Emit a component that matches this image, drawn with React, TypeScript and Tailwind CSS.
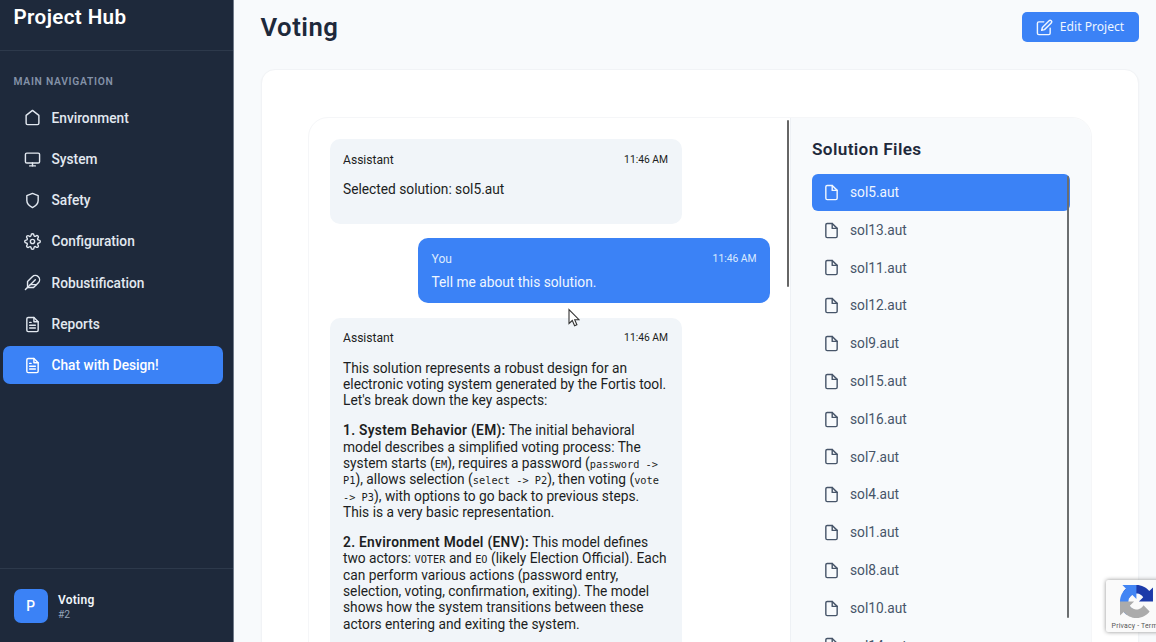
import React from "react";
import { FiFeather, FiSettings, FiShield, FiMonitor, FiFileText, FiFile, FiEdit } from "react-icons/fi";

function HomeIcon({ className }: { className?: string }) {
  return (
    <svg viewBox="0 0 24 24" fill="none" stroke="currentColor" strokeWidth="2" strokeLinecap="round" strokeLinejoin="round" className={className}>
      <path d="M3 9l9-7 9 7v11a2 2 0 0 1-2 2H5a2 2 0 0 1-2-2z" />
    </svg>
  );
}

const nav = [
  { label: "Environment", Icon: HomeIcon },
  { label: "System", Icon: FiMonitor },
  { label: "Safety", Icon: FiShield },
  { label: "Configuration", Icon: FiSettings },
  { label: "Robustification", Icon: FiFeather },
  { label: "Reports", Icon: FiFileText },
  { label: "Chat with Design!", Icon: FiFileText, active: true },
];

const files = ["sol5", "sol13", "sol11", "sol12", "sol9", "sol15", "sol16", "sol7", "sol4", "sol1", "sol8", "sol10", "sol14"];

function Code({ children }: { children: React.ReactNode }) {
  return <code className="font-['DejaVu_Sans_Mono',monospace] text-[10.3px] leading-none">{children}</code>;
}

function Lines({ lines }: { lines: React.ReactNode[] }) {
  return (
    <p className="mb-[13.6px] text-[13.76px] leading-[16.33px]">
      {lines.map((l, i) => (
        <span key={i} className="block whitespace-nowrap">{l}</span>
      ))}
    </p>
  );
}

function Sidebar() {
  return (
    <aside className="flex w-[234px] shrink-0 flex-col border-r border-[#717b8a] bg-[#1e293b]">
      <div className="h-[51px] border-b border-[#2d394b] pl-[13.5px] pt-[3px] text-[20.6px] font-semibold leading-[28px] tracking-[0.38px] text-white">
        Project Hub
      </div>
      <div className="pl-[13.5px] pt-[23.5px] text-[10.3px] font-semibold leading-[14px] tracking-[0.72px] text-[#8492a8]">MAIN NAVIGATION</div>
      <nav className="mt-[10.3px] flex flex-col gap-[3.25px] pl-[3px] pr-[10px]">
        {nav.map(({ label, Icon, active }) => (
          <a key={label} className={`flex h-[38px] items-center gap-[10.5px] rounded-[7px] pl-[21px] text-[13.73px] font-medium ${active ? "bg-[#3b82f6] text-white" : "text-[#e2e8f0]"}`}>
            <Icon className="h-[17px] w-[17px]" />
            {label}
          </a>
        ))}
      </nav>
      <div className="mt-auto flex h-[74px] items-center gap-[10px] border-t border-[#2d394b] pl-[13.5px] pt-[1px]">
        <div className="flex h-[34.5px] w-[34.5px] items-center justify-center rounded-[7px] bg-[#3b82f6] text-[13.73px] font-medium text-white">P</div>
        <div>
          <div className="text-[12px] font-semibold leading-[16px] tracking-[0.25px] text-[#f1f5f9]">Voting</div>
          <div className="text-[10.3px] leading-[13px] text-[#94a3b8]">#2</div>
        </div>
      </div>
    </aside>
  );
}

function MessageHead({ who }: { who: string }) {
  return (
    <div className="flex items-center justify-between leading-[14px]">
      <span className="text-[12.1px]">{who}</span>
      <span className="text-[10.3px]">11:46 AM</span>
    </div>
  );
}

function Recaptcha() {
  return (
    <div className="absolute left-[1106px] top-[580px] flex h-[52px] w-[60px] flex-col items-center rounded-[2px] bg-[#fafafa] pt-[5px] shadow-[0_0_4px_#909090]">
      <svg viewBox="0 0 64 64" className="h-[33px] w-[33px]">
        <path fill="#1c3aa9" d="M64 31.955l-.033-1.37V4.687l-7.16 7.16C50.948 4.674 42.033.093 32.05.093c-10.4 0-19.622 4.96-25.458 12.64l11.736 11.86a15.55 15.55 0 0 1 4.754-5.334c2.05-1.6 4.952-2.906 8.968-2.906.485 0 .86.057 1.135.163 4.976.393 9.288 3.14 11.828 7.124l-8.307 8.307 27.295-.002" />
        <path fill="#4285f4" d="M31.862.094l-1.37.033H4.594l7.16 7.16C4.58 13.147 0 22.06 0 32.046c0 10.4 4.96 19.622 12.64 25.458L24.5 45.768a15.55 15.55 0 0 1-5.334-4.754c-1.6-2.05-2.906-4.952-2.906-8.968 0-.485.057-.86.163-1.135.393-4.976 3.14-9.288 7.124-11.828l8.307 8.307L31.862.094" />
        <path fill="#ababab" d="M.001 32.045l.033 1.37v25.898l7.16-7.16c5.86 7.173 14.774 11.754 24.76 11.754 10.4 0 19.622-4.96 25.458-12.64L45.676 39.408a15.55 15.55 0 0 1-4.754 5.334c-2.05 1.6-4.952 2.906-8.968 2.906-.485 0-.86-.057-1.135-.163-4.976-.393-9.288-3.14-11.828-7.124l8.307-8.307-27.297-.01" />
      </svg>
      <div className="whitespace-nowrap pl-[1px] pt-[2.5px] text-[6.9px] leading-[10px] tracking-[0.2px] text-[#555]">Privacy - Terms</div>
    </div>
  );
}

export default function App() {
  return (
    <div className="relative flex h-[642px] w-[1156px] overflow-hidden bg-[#f8fafc] font-[Roboto,sans-serif]">
      <Sidebar />
      <main className="flex min-w-0 flex-1 flex-col pl-[26.5px] pr-[17.5px]">
        <header className="flex h-[69px] shrink-0 items-start justify-between">
          <h1 className="pt-[9.5px] text-[25.7px] font-semibold leading-[34px] tracking-[0.5px] text-[#1e293b]">Voting</h1>
          <button className="mt-[12px] flex h-[30px] w-[117px] items-center justify-center gap-[7px] rounded-[5px] bg-[#3b82f6] font-['Noto_Sans',sans-serif] text-[12.1px] text-[#eff6ff]">
            <FiEdit className="h-[17px] w-[17px]" />
            Edit Project
          </button>
        </header>
        <section className="h-[640px] shrink-0 rounded-[14px] border border-[#f1f3f6] bg-white px-[46px] pt-[47px] shadow-[0_1px_2px_rgba(0,0,0,0.04)]">
          <div className="flex h-[600px] overflow-hidden rounded-[20px] border border-[#f5f6f8]">
            <div className="flex w-[482.5px] shrink-0 border-r border-[#eef1f5]">
              <div className="flex w-[461.5px] shrink-0 flex-col pl-[21px] pt-[20.5px]">
                <div className="h-[85px] w-[352px] shrink-0 rounded-[10px] bg-[#f1f5f9] px-[13.5px] pt-[14px] text-[#1c1e22]">
                  <MessageHead who="Assistant" />
                  <p className="mt-[14.8px] text-[13.76px] leading-[16.3px]">Selected solution: sol5.aut</p>
                </div>
                <div className="mt-[14.5px] h-[65px] w-[352px] shrink-0 self-end rounded-[10px] bg-[#3b82f6] px-[13.5px] pt-[14px] text-[#dbeafe]">
                  <MessageHead who="You" />
                  <p className="mt-[7.5px] text-[13.76px] leading-[16.3px] text-[#eff6ff]">Tell me about this solution.</p>
                </div>
                <div className="mt-[14.5px] h-[400px] w-[352px] shrink-0 rounded-[10px] bg-[#f1f5f9] px-[13.5px] pt-[13.8px] text-[#1c1e22]">
                  <div className="mb-[14.5px]"><MessageHead who="Assistant" /></div>
                  <Lines lines={[
                    "This solution represents a robust design for an",
                    "electronic voting system generated by the Fortis tool.",
                    "Let's break down the key aspects:",
                  ]} />
                  <Lines lines={[
                    <><strong className="font-semibold tracking-[0.29px]">1. System Behavior (EM):</strong> The initial behavioral</>,
                    "model describes a simplified voting process: The",
                    <>system starts (<Code>EM</Code>), requires a password (<Code>password -&gt;</Code></>,
                    <><Code>P1</Code>), allows selection (<Code>select -&gt; P2</Code>), then voting (<Code>vote</Code></>,
                    <><Code>-&gt; P3</Code>), with options to go back to previous steps.</>,
                    "This is a very basic representation.",
                  ]} />
                  <Lines lines={[
                    <><strong className="font-semibold tracking-[0.29px]">2. Environment Model (ENV):</strong> This model defines</>,
                    <>two actors: <Code>VOTER</Code> and <Code>EO</Code> (likely Election Official). Each</>,
                    "can perform various actions (password entry,",
                    "selection, voting, confirmation, exiting). The model",
                    "shows how the system transitions between these",
                    "actors entering and exiting the system.",
                  ]} />
                </div>
              </div>
              <div className="ml-auto mr-px mt-[2px] h-[167px] w-[2.5px] rounded-full bg-[#666]" />
            </div>
            <div className="flex-1 bg-[#f8fafc] pl-[21px] pt-[18.5px]">
              <h2 className="text-[17.2px] font-semibold leading-[24px] tracking-[0.35px] text-[#1e293b]">Solution Files</h2>
              <div className="relative mt-[13px] w-[257.5px]">
                {files.map((f, i) => (
                  <div key={f} className={`flex h-[37.8px] items-center gap-[10.5px] rounded-[6px] pl-[10.5px] text-[13.73px] ${i === 0 ? "bg-[#3b82f6] text-[#eff6ff]" : "text-[#475569]"}`}>
                    <FiFile className="h-[17px] w-[17px]" />
                    {f}.aut
                  </div>
                ))}
                <div className="absolute right-[0.5px] top-[2px] h-[442px] w-[2.5px] rounded-full bg-[#6b6e70]" />
              </div>
            </div>
          </div>
        </section>
      </main>
      <svg className="absolute left-[568px] top-[308px] h-[19px] w-[12px]" viewBox="0 0 12 19">
        <path d="M1 1.5v14l3.300-3 2.300 5.200 2.300-1-2.200-5h4.300z" fill="#fff" stroke="#333" strokeWidth="1.1" />
      </svg>
      <Recaptcha />
    </div>
  );
}
